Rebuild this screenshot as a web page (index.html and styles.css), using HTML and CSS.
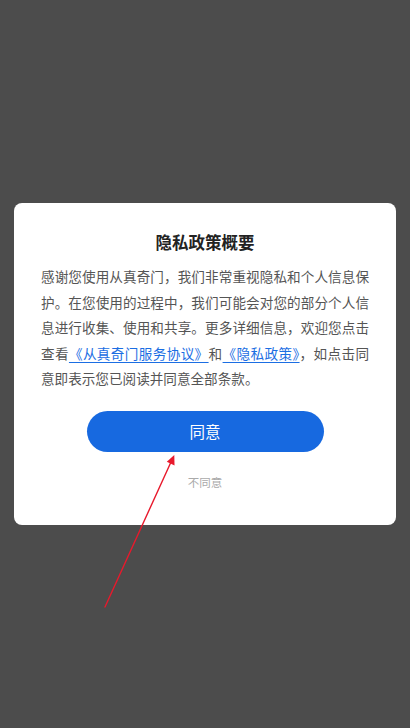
FILE: index.html
```html
<!DOCTYPE html>
<html lang="zh-CN">
<head>
<meta charset="utf-8">
<link rel="stylesheet" href="styles.css">
</head>
<body>
<div class="screen">
  <div class="dialog">
    <h1 class="title">隐私政策概要</h1>
    <p class="body">感谢您使用从真奇门，我们非常重视隐私和个人信息保护。在您使用的过程中，我们可能会对您的部分个人信息进行收集、使用和共享。更多详细信息，欢迎您点击查看<a class="link" href="#">《从真奇门服务协议》</a>和<a class="link" href="#">《隐私政策》</a>，如点击同意即表示您已阅读并同意全部条款。</p>
    <button class="agree">同意</button>
    <div class="disagree">不同意</div>
  </div>
  <svg class="arrow" width="410" height="728" viewBox="0 0 410 728">
    <line x1="105" y1="607" x2="171" y2="462" stroke="#e8192c" stroke-width="1.4" stroke-linecap="round"/>
    <polygon points="174.3,455 174.5,465.5 166.8,461.8" fill="#e8192c"/>
  </svg>
</div>
</body>
</html>
```

FILE: styles.css
```css
html, body {
  margin: 0;
  padding: 0;
  background: #4c4c4c;
}
.screen {
  position: relative;
  width: 410px;
  height: 728px;
  display: flex;
  flex-direction: column;
  align-items: center;
  padding-top: 203px;
  box-sizing: border-box;
  font-family: "Noto Sans CJK SC", "Noto Sans", sans-serif;
}
.dialog {
  width: 382px;
  box-sizing: border-box;
  background: #fff;
  border-radius: 8px;
  padding: 27px 27px 35px;
  display: flex;
  flex-direction: column;
  align-items: center;
}
.title {
  margin: 0;
  font-size: 16.5px;
  line-height: 24px;
  font-weight: 700;
  color: #222;
}
.body {
  margin: 10px 0 0;
  width: 100%;
  font-size: 13.6px;
  line-height: 25.5px;
  color: #555;
  text-align: justify;
}
.link {
  color: #1b6ee3;
  text-decoration: underline;
  text-underline-offset: 3px;
}
.agree {
  margin-top: 19px;
  width: 237px;
  height: 41px;
  border: none;
  border-radius: 21px;
  background: #1769e0;
  color: #fff;
  font-family: inherit;
  font-size: 15.5px;
  padding: 0;
}
.disagree {
  margin-top: 22px;
  font-size: 11.5px;
  line-height: 16px;
  color: #aaa;
}
.arrow {
  position: absolute;
  left: 0;
  top: 0;
  pointer-events: none;
}
```
